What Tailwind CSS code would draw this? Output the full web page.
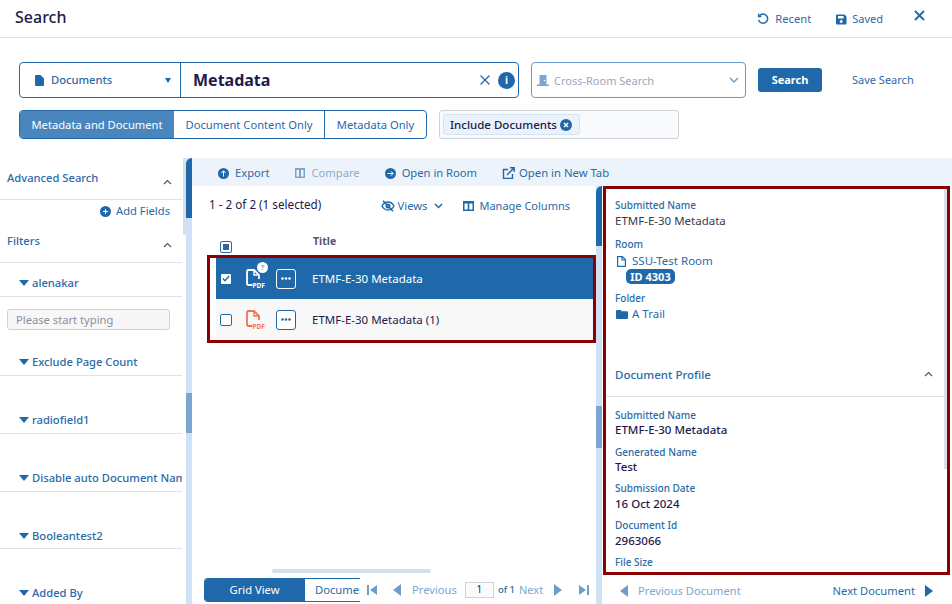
<!DOCTYPE html>
<html><head><meta charset="utf-8"><script src="https://cdn.jsdelivr.net/npm/@tailwindcss/browser@4"></script></head>
<body class="m-0 bg-white">
<div class="w-[952px] h-[604px] overflow-hidden flex flex-col font-['Noto_Sans',sans-serif] text-[11.2px] text-[#2a6aa8] bg-white">
  <!-- header -->
  <header class="h-[38px] shrink-0 border-b border-[#dbe3ec] flex items-center pl-[15px] pr-[27px]">
    <h1 class="text-[16px] font-medium text-[#1e1a4b] leading-none -mt-[3px]">Search</h1>
    <div class="ml-auto flex items-center mt-[2px]">
      <svg class="w-[12px] h-[12px]" viewBox="0 0 12 12" fill="none" stroke="#1f69ab" stroke-width="1.5"><path d="M2.4 2.8A4.6 4.6 0 1 1 1.6 7"/><path d="M1.6 .8v2.8h2.8" stroke-width="1.4"/></svg>
      <span class="ml-[6px]">Recent</span>
      <svg class="w-[11px] h-[11px] ml-[25px]" viewBox="0 0 11 11"><path fill="#1f69ab" fill-rule="evenodd" d="M1 .5h7.5L10.500 2.500V9.500a1 1 0 0 1-1 1H1a1 1 0 0 1-1-1v-8a1 1 0 0 1 1-1zM2 2v2.500h5.500V2zM5.200 6a1.500 1.500 0 1 0 .01 0z"/></svg>
      <span class="ml-[5px] text-[11px]">Saved</span>
      <svg class="w-[11px] h-[11px] ml-[31px] -mt-[8px]" viewBox="0 0 11 11" fill="none" stroke="#1f69ab" stroke-width="1.800"><path d="M1 1l9 9M10 1l-9 9"/></svg>
    </div>
  </header>
  <!-- search row -->
  <div class="mt-[24px] ml-[19px] flex items-center h-[36px]">
    <div class="w-[500px] h-[36px] border border-[#1f69ab] rounded-[4px] flex items-center">
      <div class="w-[161px] h-full border-r border-[#1f69ab] flex items-center pl-[15px] shrink-0">
        <svg class="w-[9px] h-[11px]" viewBox="0 0 9 11"><path fill="#1f69ab" d="M1 0h4.500L9 3.500V10a1 1 0 0 1-1 1H1a1 1 0 0 1-1-1V1a1 1 0 0 1 1-1z"/></svg>
        <span class="ml-[7px] text-[11.2px] font-medium">Documents</span>
        <svg class="w-[6px] h-[5px] ml-auto mr-[9px]" viewBox="0 0 6 5"><path fill="#1f69ab" d="M0 0h6L3 5z"/></svg>
      </div>
      <span class="ml-[12px] text-[16px] font-bold text-[#1e1a4b]">Metadata</span>
      <svg class="w-[10px] h-[10px] ml-auto" viewBox="0 0 10 10" fill="none" stroke="#1f69ab" stroke-width="1.200"><path d="M.5.500l9 9M9.500.500l-9 9"/></svg>
      <span class="w-[17px] h-[17px] rounded-full bg-[#1f69ab] text-white text-[10px] font-bold flex items-center justify-center ml-[8px] mr-[3px]">i</span>
    </div>
    <div class="ml-[12px] w-[215px] h-[36px] border border-[#6a9ccb] rounded-[4px] flex items-center pl-[5px] pr-[6px]">
      <svg class="w-[12px] h-[11px]" viewBox="0 0 12 11"><path fill="#7ea6cd" d="M2.500 0h7v9.500H12V11H0V9.500h2.500z"/><circle cx="7.500" cy="5.500" r=".8" fill="#fff"/></svg>
      <span class="ml-[5px] text-[#a6a3b8] text-[11px] mt-[2px]">Cross-Room Search</span>
      <svg class="w-[10px] h-[6px] ml-auto" viewBox="0 0 10 6" fill="none" stroke="#6a9ccb" stroke-width="1.400"><path d="M1 1l4 4 4-4"/></svg>
    </div>
    <button class="ml-[12px] w-[64px] h-[24px] pt-[1px] bg-[#1f69ab] rounded-[3px] text-white text-[11px] font-bold">Search</button>
    <span class="ml-[30px] mt-[1px] text-[11px]">Save Search</span>
  </div>
  <!-- segmented row -->
  <div class="mt-[12px] ml-[19px] flex items-center h-[29px]">
    <div class="w-[408px] h-[29px] border border-[#1f69ab] rounded-[4px] flex overflow-hidden">
      <span class="w-[154px] pt-[2px] bg-[#4a86be] text-white flex items-center justify-center">Metadata and Document</span>
      <span class="w-[151px] pt-[2px] border-r border-[#1f69ab] flex items-center justify-center">Document Content Only</span>
      <span class="flex-1 pt-[2px] flex items-center justify-center">Metadata Only</span>
    </div>
    <div class="ml-[12px] w-[240px] h-[29px] border border-[#cfd3d8] rounded-[3px] bg-[#f9fafb] flex items-center pl-[3px]">
      <span class="w-[137px] h-[21px] bg-[#eaf2fb] border border-[#d4e4f5] rounded-[3px] flex items-center pl-[6px] text-[#1e1a4b] text-[11.500px] font-medium">Include Documents
        <svg class="w-[12px] h-[12px] ml-[3px]" viewBox="0 0 12 12"><circle cx="6" cy="6" r="6" fill="#1f69ab"/><path d="M4 4l4 4M8 4l-4 4" stroke="#fff" stroke-width="1.500"/></svg>
      </span>
    </div>
  </div>
  <!-- main -->
  <div class="mt-[19px] flex flex-1 min-h-0">
    <!-- sidebar -->
    <aside class="w-[186px] shrink-0 flex overflow-hidden">
      <div class="w-[182px] shrink-0 overflow-hidden">
        <div class="h-[42px] border-b border-[#dbe3ec] flex items-end pb-[12px] pl-[7px] pr-[10px] font-medium">Advanced Search
          <svg class="w-[9px] h-[6px] ml-auto mb-[2px]" viewBox="0 0 9 6" fill="none" stroke="#555" stroke-width="1.200"><path d="M1 5l3.500-3.500L8 5"/></svg>
        </div>
        <div class="h-[22px] flex items-center justify-end pr-[12px]">
          <svg class="w-[11px] h-[11px] mr-[5px]" viewBox="0 0 11 11"><circle cx="5.500" cy="5.500" r="5.500" fill="#1f69ab"/><path d="M3 5.500h5M5.500 3v5" stroke="#fff" stroke-width="1"/></svg>Add Fields
        </div>
        <div class="h-[41px] border-b border-[#dbe3ec] flex items-end pb-[12px] pl-[7px] pr-[10px] font-medium">Filters
          <svg class="w-[9px] h-[6px] ml-auto mb-[2px]" viewBox="0 0 9 6" fill="none" stroke="#555" stroke-width="1.200"><path d="M1 5l3.500-3.500L8 5"/></svg>
        </div>
        <div class="h-[34px] border-b border-[#dbe3ec] flex items-end pb-[5px] pl-[19px] font-medium leading-[16px]"><svg class="w-[10px] h-[6px] mr-[3px] mb-[5px]" viewBox="0 0 10 6"><path fill="#1f69ab" d="M0 0h10L5 6z"/></svg>alenakar</div>
        <div class="h-[48px] pt-[12px] pl-[7px]">
          <div class="w-[163px] h-[21px] pt-[2px] bg-[#f7f7f7] border border-[#cfd3d8] rounded-[3px] flex items-center pl-[8px] text-[#8e8e9e]">Please start typing</div>
        </div>
        <div class="h-[31px] border-b border-[#dbe3ec] flex items-end pb-[5px] pl-[19px] font-medium leading-[16px]"><svg class="w-[10px] h-[6px] mr-[3px] mb-[5px]" viewBox="0 0 10 6"><path fill="#1f69ab" d="M0 0h10L5 6z"/></svg>Exclude Page Count</div>
        <div class="h-[58px] border-b border-[#dbe3ec] flex items-end pb-[5px] pl-[19px] font-medium leading-[16px]"><svg class="w-[10px] h-[6px] mr-[3px] mb-[5px]" viewBox="0 0 10 6"><path fill="#1f69ab" d="M0 0h10L5 6z"/></svg>radiofield1</div>
        <div class="h-[58px] border-b border-[#dbe3ec] flex items-end pb-[5px] pl-[19px] font-medium leading-[16px] whitespace-nowrap"><svg class="w-[10px] h-[6px] mr-[3px] mb-[5px] shrink-0" viewBox="0 0 10 6"><path fill="#1f69ab" d="M0 0h10L5 6z"/></svg>Disable auto Document Name</div>
        <div class="h-[57px] border-b border-[#dbe3ec] flex items-end pb-[4px] pl-[19px] font-medium leading-[16px]"><svg class="w-[10px] h-[6px] mr-[3px] mb-[5px]" viewBox="0 0 10 6"><path fill="#1f69ab" d="M0 0h10L5 6z"/></svg>Booleantest2</div>
        <div class="h-[52px] flex items-end pl-[19px] font-medium leading-[16px]"><svg class="w-[10px] h-[6px] mr-[3px] mb-[5px]" viewBox="0 0 10 6"><path fill="#1f69ab" d="M0 0h10L5 6z"/></svg>Added By</div>
      </div>
      <div class="w-[3px] ml-[1px] h-[77px] bg-[#d9dfe6] rounded-full"></div>
    </aside>
    <!-- splitter -->
    <div class="w-[6px] shrink-0 bg-[#cfe2f5] flex flex-col">
      <div class="h-[60px] bg-[#1f69ab] rounded-tl-[6px]"></div>
      <div class="mt-[175px] h-[40px] bg-[#7ba6d0]"></div>
    </div>
    <!-- content -->
    <div class="flex-1 min-w-0 flex flex-col">
      <div class="h-[28px] shrink-0 pt-[2px] bg-[#edf3fa] flex items-center pl-[26px]">
        <svg class="w-[11px] h-[11px]" viewBox="0 0 11 11"><circle cx="5.500" cy="5.500" r="5.500" fill="#1f69ab"/><path d="M5.500 8.500V3M3.300 5l2.200-2.200L7.700 5" stroke="#fff" fill="none"/></svg>
        <span class="ml-[6px]">Export</span>
        <svg class="w-[10px] h-[10px] ml-[26px]" viewBox="0 0 10 10"><path fill="#7ea6cd" fill-rule="evenodd" d="M0 0h10v10H0zM1.500 2v6.500h2.500V2zM6 2v6.500h2.500V2z"/></svg>
        <span class="ml-[6px] text-[#8eabc8]">Compare</span>
        <svg class="w-[11px] h-[11px] ml-[25px]" viewBox="0 0 11 11"><circle cx="5.500" cy="5.500" r="5.500" fill="#1f69ab"/><path d="M2.500 5.500H8M6 3.300l2.200 2.200L6 7.700" stroke="#fff" fill="none"/></svg>
        <span class="ml-[6px]">Open in Room</span>
        <svg class="w-[13px] h-[12px] ml-[25px]" viewBox="0 0 13 12" fill="none" stroke="#1f69ab" stroke-width="1.400"><path d="M6 2.500H1.500v9h9V7"/><path d="M5 8l6.500-6.500M8 .8h4.200V5"/></svg>
        <span class="ml-[4px] text-[11.3px]">Open in New Tab</span>
      </div>
      <div class="flex flex-1 min-h-0">
        <!-- list -->
        <section class="w-[404px] shrink-0 flex flex-col relative">
          <div class="h-[38px] flex items-start pl-[17px] pt-[9px]">
            <span class="text-[11.7px] text-[#1e1a4b] leading-[18px]">1 - 2 of 2 (1 selected)</span>
            <div class="ml-auto flex items-center pr-[26px] mt-[3px]">
              <svg class="w-[14px] h-[12px]" viewBox="0 0 14 12" fill="none" stroke="#1f69ab" stroke-width="1.400"><path d="M1 6s2.200-4 6-4 6 4 6 4-2.200 4-6 4-6-4-6-4z"/><circle cx="7" cy="6" r="1.800"/><path d="M2 .8l10 10.400" stroke-width="1.600"/></svg>
              <span class="ml-[3px]">Views</span>
              <svg class="w-[9px] h-[6px] ml-[7px]" viewBox="0 0 9 6" fill="none" stroke="#1f69ab" stroke-width="1.500"><path d="M1 1l3.500 3.500L8 1"/></svg>
              <svg class="w-[11px] h-[10px] ml-[20px]" viewBox="0 0 11 10"><path fill="#1f69ab" fill-rule="evenodd" d="M0 0h11v10H0zM1.500 2.500v6h3.200v-6zM6.300 2.500v6h3.200v-6z"/></svg>
              <span class="ml-[5px] text-[11px]">Manage Columns</span>
            </div>
          </div>
          <div class="h-[31px] flex pl-[28px] relative">
            <span class="mt-[17px] w-[12px] h-[12px] border border-[#1f69ab] rounded-[2px] flex items-center justify-center"><span class="w-[6px] h-[6px] bg-[#33659b]"></span></span>
            <span class="ml-[81px] mt-[10px] text-[10.500px] font-bold text-[#55556f] leading-[14px]">Title</span>
          </div>
          <div class="ml-[15px] w-[389px] h-[88px] border-[3px] border-[#8b0000] pl-[6px] flex flex-col text-[11.500px]">
            <div class="h-[41px] bg-[#1f69ab] text-white flex items-center relative">
              <span class="ml-[5px] w-[10px] h-[10px] bg-white rounded-[1px] flex items-center justify-center"><svg class="w-[8px] h-[7px]" viewBox="0 0 8 7" fill="none" stroke="#1f69ab" stroke-width="1.400"><path d="M.8 3.500l2.200 2.300L7.200 1"/></svg></span>
              <svg class="w-[20px] h-[22px] ml-[15px]" viewBox="0 0 20 22" fill="none"><path d="M6.500 17H2.500A1.500 1.500 0 0 1 1 15.500V3.500A1.500 1.500 0 0 1 2.500 2H8l5 5v4" stroke="#fff" stroke-width="1.800"/><path d="M8 2v5h5" stroke="#fff" stroke-width="1.400"/><text x="6.500" y="20" font-size="6.500" font-weight="700" fill="#fff">PDF</text></svg>
              <span class="absolute left-[41px] top-[4px] w-[11px] h-[11px] rounded-full bg-white text-[#7ea6cd] text-[7px] font-bold leading-[11px] text-center">?</span>
              <span class="ml-[10px] w-[20px] h-[20px] border border-white rounded-[3px] flex items-center justify-center"><svg class="w-[10px] h-[3px]" viewBox="0 0 10 3"><circle cx="1.500" cy="1.500" r="1.300" fill="#fff"/><circle cx="5" cy="1.500" r="1.300" fill="#fff"/><circle cx="8.500" cy="1.500" r="1.300" fill="#fff"/></svg></span>
              <span class="ml-[16px]">ETMF-E-30 Metadata</span>
            </div>
            <div class="flex-1 bg-[#f8f8f8] text-[#1e1a4b] flex items-center">
              <span class="ml-[4px] w-[12px] h-[12px] bg-white border border-[#1f69ab] rounded-[2px]"></span>
              <svg class="w-[20px] h-[22px] ml-[14px]" viewBox="0 0 20 22" fill="none"><path d="M6.500 17H2.500A1.500 1.500 0 0 1 1 15.500V3.500A1.500 1.500 0 0 1 2.500 2H8l5 5v4" stroke="#f0734f" stroke-width="1.800"/><path d="M8 2v5h5" stroke="#f0734f" stroke-width="1.400"/><text x="6.500" y="20" font-size="6.500" font-weight="700" fill="#f0734f">PDF</text></svg>
              <span class="ml-[10px] w-[20px] h-[20px] border border-[#1f69ab] rounded-[3px] bg-white flex items-center justify-center"><svg class="w-[10px] h-[3px]" viewBox="0 0 10 3"><circle cx="1.500" cy="1.500" r="1.300" fill="#1f69ab"/><circle cx="5" cy="1.500" r="1.300" fill="#1f69ab"/><circle cx="8.500" cy="1.500" r="1.300" fill="#1f69ab"/></svg></span>
              <span class="ml-[16px]">ETMF-E-30 Metadata (1)</span>
            </div>
          </div>
          <div class="mt-auto ml-[80px] w-[159px] h-[4px] rounded-full bg-[#d6e0eb]"></div>
          <div class="mt-[5px] h-[24px] flex items-center pl-[12px] mb-[2px]">
            <div class="w-[156px] h-[24px] flex overflow-hidden rounded-l-[4px] border-y border-[#1f69ab]">
              <span class="w-[101px] shrink-0 bg-[#1f69ab] text-white flex items-center justify-center">Grid View</span>
              <span class="pl-[10px] flex items-center whitespace-nowrap">Document View</span>
            </div>
            <div class="flex items-center text-[#7ea6cd]">
              <svg class="ml-[7px] w-[10px] h-[10px]" viewBox="0 0 10 10"><path fill="#6f9dca" d="M0 0h2v10H0zM10 0v10L3 5z"/></svg>
              <svg class="ml-[16px] w-[8px] h-[12px]" viewBox="0 0 8 12"><path fill="#6f9dca" d="M8 0v12L0 6z"/></svg>
              <span class="ml-[11px]">Previous</span>
              <span class="ml-[8px] w-[29px] h-[16px] border border-[#cfd3d8] bg-[#fbfbfb] text-[#1e1a4b] flex items-center justify-center text-[10px]">1</span>
              <span class="ml-[4px] text-[9.500px] text-[#2a6aa8] font-medium">of 1</span>
              <span class="ml-[4px] text-[11px]">Next</span>
              <svg class="ml-[11px] w-[8px] h-[12px]" viewBox="0 0 8 12"><path fill="#6f9dca" d="M0 0v12l8-6z"/></svg>
              <svg class="ml-[17px] w-[10px] h-[10px]" viewBox="0 0 10 10"><path fill="#6f9dca" d="M10 0H8v10h2zM0 0v10l7-5z"/></svg>
            </div>
          </div>
        </section>
        <!-- splitter 2 -->
        <div class="w-[6px] shrink-0 bg-[#cfe2f5] flex flex-col">
          <div class="h-[60px] bg-[#1f69ab] rounded-tl-[6px]"></div>
          <div class="mt-[160px] h-[42px] bg-[#7ba6d0]"></div>
        </div>
        <!-- right panel -->
        <section class="w-[350px] shrink-0 flex flex-col pl-[1px] pr-[2px]">
          <div class="w-[347px] h-[389px] border-[3px] border-[#8b0000] overflow-hidden relative pl-[9px] text-[11.500px] text-[#1e1a4b]">
            <div class="absolute right-[0px] top-[0px] w-[3px] h-[280px] bg-[#d9dfe6]"></div>
            <p class="mt-[9px] text-[10px] font-medium text-[#2a6aa8] leading-[14px]">Submitted Name</p>
            <p class="mt-[1px] leading-[16px] text-[#3a3a4a]">ETMF-E-30 Metadata</p>
            <p class="mt-[8px] text-[10px] font-medium text-[#2a6aa8] leading-[14px]">Room</p>
            <p class="mt-[2px] leading-[16px] text-[#2a6aa8] flex items-center pl-[2px]"><svg class="w-[9px] h-[11px] mr-[6px]" viewBox="0 0 9 11" fill="none" stroke="#1f69ab" stroke-width="1.200"><path d="M.6.600h4.800l3 3v6.800H.6z"/><path d="M5 .600v3.400h3.400"/></svg>SSU-Test Room</p>
            <p class="ml-[11px] w-[49px] h-[15px] bg-[#1f69ab] rounded-[5px] text-white text-[11px] font-bold leading-[15px] text-center">ID 4303</p>
            <p class="mt-[7px] text-[10px] font-medium text-[#2a6aa8] leading-[14px]">Folder</p>
            <p class="mt-[1px] leading-[16px] text-[#2a6aa8] flex items-center pl-[1px]"><svg class="w-[12px] h-[9px] mr-[4px]" viewBox="0 0 12 9"><path fill="#1f69ab" d="M1 0h3.500l1.200 1.300H11a1 1 0 0 1 1 1V8a1 1 0 0 1-1 1H1a1 1 0 0 1-1-1V1a1 1 0 0 1 1-1z"/></svg>A Trail</p>
            <div class="mt-[45px] -ml-[9px] h-[30px] pl-[9px] pr-[14px] border-b border-[#dbe3ec] flex items-start justify-between text-[#2a6aa8] font-medium leading-[16px]">Document Profile
              <svg class="w-[9px] h-[6px] mt-[4px]" viewBox="0 0 9 6" fill="none" stroke="#555" stroke-width="1.200"><path d="M1 5l3.500-3.500L8 5"/></svg>
            </div>
            <p class="mt-[11px] text-[10px] font-medium text-[#2a6aa8] leading-[14px]">Submitted Name</p>
            <p class="leading-[16px] font-medium">ETMF-E-30 Metadata</p>
            <p class="mt-[7px] text-[10px] font-medium text-[#2a6aa8] leading-[14px]">Generated Name</p>
            <p class="leading-[16px] font-medium">Test</p>
            <p class="mt-[6px] text-[10px] font-medium text-[#2a6aa8] leading-[14px]">Submission Date</p>
            <p class="mt-[1px] leading-[16px] font-medium">16 Oct 2024</p>
            <p class="mt-[6px] text-[10px] font-medium text-[#2a6aa8] leading-[14px]">Document Id</p>
            <p class="mt-[1px] leading-[16px] font-medium">2963066</p>
            <p class="mt-[6px] text-[10px] font-medium text-[#2a6aa8] leading-[14px]">File Size</p>
          </div>
          <div class="flex items-center mt-[7px] h-[18px] pl-[17px] pr-[17px]">
            <svg class="w-[8px] h-[12px]" viewBox="0 0 8 12"><path fill="#6f9dca" d="M8 0v12L0 6z"/></svg>
            <span class="ml-[10px] text-[#7ea6cd]">Previous Document</span>
            <span class="ml-auto">Next Document</span>
            <svg class="ml-[10px] w-[8px] h-[12px]" viewBox="0 0 8 12"><path fill="#1f69ab" d="M0 0v12l8-6z"/></svg>
          </div>
        </section>
      </div>
    </div>
  </div>
</div>
</body></html>
